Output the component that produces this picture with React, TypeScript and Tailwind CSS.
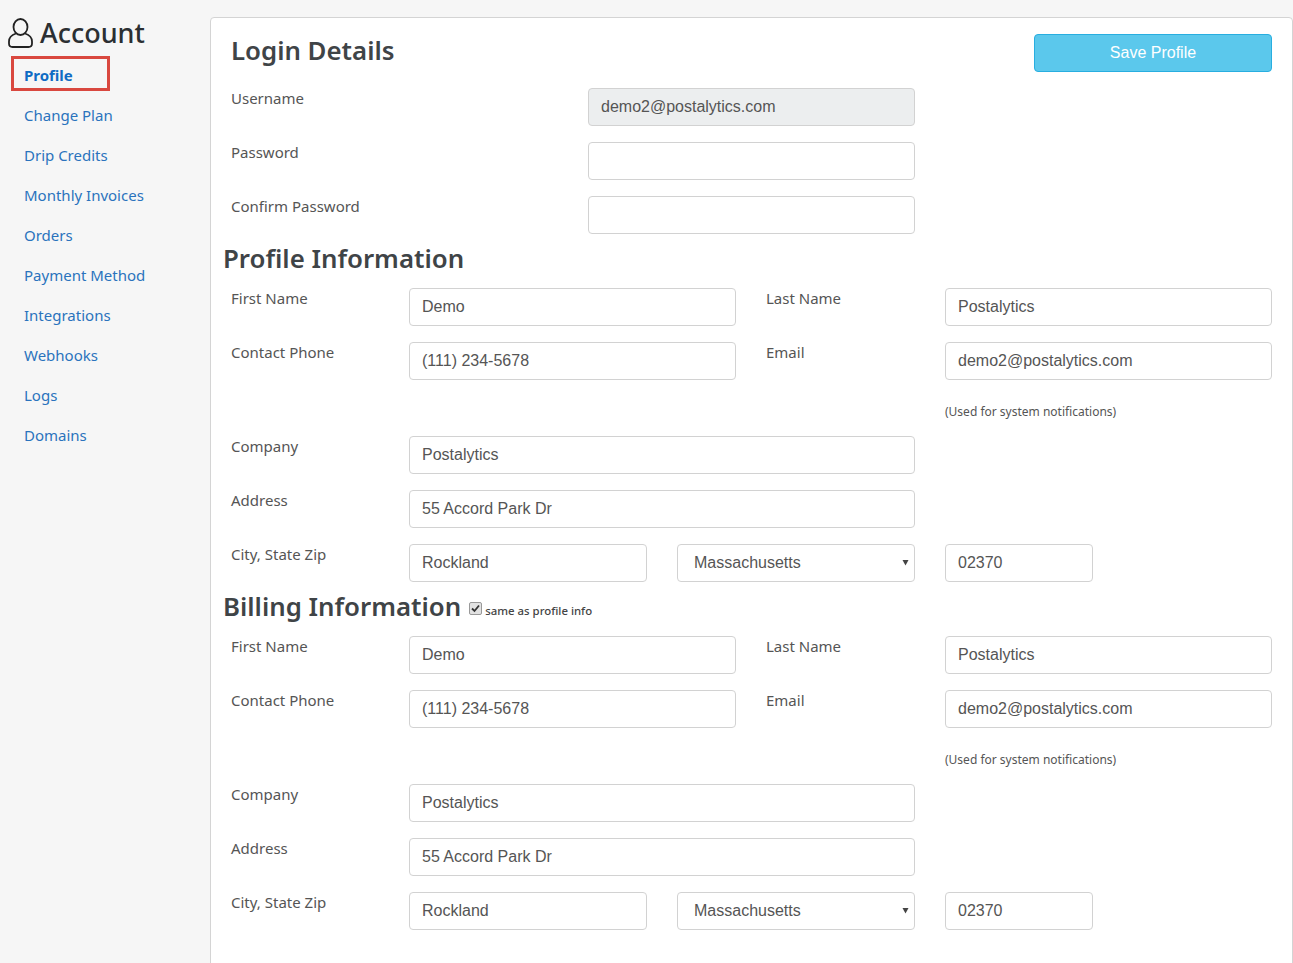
import React from 'react';

const links = ['Profile', 'Change Plan', 'Drip Credits', 'Monthly Invoices', 'Orders', 'Payment Method', 'Integrations', 'Webhooks', 'Logs', 'Domains'];

const Label: React.FC<{ text: string; className: string }> = ({ text, className }) => (
  <label className={`shrink-0 text-[15px] leading-[21px] text-[#555] ${className}`}>{text}</label>
);

const Field: React.FC<{ value?: string; className: string; disabled?: boolean }> = ({ value = '', className, disabled }) => (
  <input
    readOnly
    disabled={disabled}
    defaultValue={value}
    className={`h-[38px] shrink-0 rounded-[4px] border border-[#d2d2d2] px-3 font-['Liberation_Sans',sans-serif] text-[16px] text-[#555] ${disabled ? 'bg-[#eceeef]' : 'bg-white'} ${className}`}
  />
);

const Heading: React.FC<{ text: string; children?: React.ReactNode }> = ({ text, children }) => (
  <div className="-mb-[5px] -ml-[8px] -mt-[11px] flex h-[38px] items-center">
    <h2 className="text-[25.8px] font-semibold leading-[38px] text-[#3f4447]">{text}</h2>
    {children}
  </div>
);

const ContactFields: React.FC = () => (
  <>
    <div className="flex">
      <Label text="First Name" className="w-[178px]" />
      <Field value="Demo" className="w-[327px]" />
      <Label text="Last Name" className="ml-[30px] w-[179px]" />
      <Field value="Postalytics" className="w-[327px]" />
    </div>
    <div className="flex">
      <Label text="Contact Phone" className="w-[178px]" />
      <Field value="(111) 234-5678" className="w-[327px]" />
      <Label text="Email" className="ml-[30px] w-[179px]" />
      <Field value="demo2@postalytics.com" className="w-[327px]" />
    </div>
    <div className="flex h-[24px] items-end pl-[714px] text-[12px] leading-[16px] text-[#555]">(Used for system notifications)</div>
    <div className="flex">
      <Label text="Company" className="w-[178px]" />
      <Field value="Postalytics" className="w-[506px]" />
    </div>
    <div className="flex">
      <Label text="Address" className="w-[178px]" />
      <Field value="55 Accord Park Dr" className="w-[506px]" />
    </div>
    <div className="flex">
      <Label text="City, State Zip" className="w-[178px]" />
      <Field value="Rockland" className="w-[238px]" />
      <div className="relative ml-[30px] h-[38px] w-[238px] shrink-0">
        <select
          defaultValue="Massachusetts"
          className="h-full w-full appearance-none rounded-[4px] border border-[#d2d2d2] bg-white px-4 font-['Liberation_Sans',sans-serif] text-[16px] text-[#555]"
        >
          <option>Massachusetts</option>
        </select>
        <svg className="absolute right-[6px] top-[15px]" width="7" height="7" viewBox="0 0 7 7">
          <path d="M0.5 1 H6.5 L3.5 6.5 Z" fill="#444" />
        </svg>
      </div>
      <Field value="02370" className="ml-[30px] w-[148px]" />
    </div>
  </>
);

export default function App() {
  return (
    <div className="flex h-[963px] overflow-hidden bg-[#f6f6f6] font-['Noto_Sans',sans-serif]">
      <aside className="w-[210px] shrink-0">
        <div className="flex h-[55px] items-center gap-[7px] pl-2 pt-[11px]">
          <svg width="25" height="30" viewBox="0 0 25 30" fill="none" stroke="#222" strokeWidth="1.8">
            <ellipse cx="12.5" cy="9" rx="7" ry="8" />
            <path d="M8 15.5 C3.5 17 1 19.5 1 23.5 V25.5 C1 27.5 2.5 29 4.5 29 H20.5 C22.5 29 24 27.5 24 25.5 V23.5 C24 19.5 21.5 17 17 15.5" />
          </svg>
          <h1 className="text-[27px] font-medium leading-[36px] text-[#2b2f32]">Account</h1>
        </div>
        <nav className="flex flex-col">
          {links.map((l, i) => (
            <a key={l} className={`relative flex h-[40px] items-center pl-6 text-[15px] ${i === 0 ? 'font-bold text-[#0f6cc4]' : 'text-[#2a73bd]'}`}>
              {l}
              {i === 0 && <span className="absolute left-[11px] top-[1px] h-[35px] w-[99px] border-[3px] border-[#d9483f]" />}
            </a>
          ))}
        </nav>
      </aside>
      <main className="mt-[17px] flex h-[1000px] w-[1083px] flex-col gap-4 rounded-t-[4px] border border-[#d4d4d4] bg-white pl-5 pr-5 pt-4">
        <div className="flex h-[38px] items-center justify-between">
          <h2 className="mb-[6px] text-[25.8px] font-semibold leading-[38px] text-[#3f4447]">Login Details</h2>
          <button className="h-[38px] w-[238px] rounded-[4px] border border-[#28aee0] bg-[#5bc8ec] font-['Liberation_Sans',sans-serif] text-[16px] text-white">Save Profile</button>
        </div>
        <div className="flex">
          <Label text="Username" className="w-[357px]" />
          <Field value="demo2@postalytics.com" disabled className="w-[327px]" />
        </div>
        <div className="flex">
          <Label text="Password" className="w-[357px]" />
          <Field className="w-[327px]" />
        </div>
        <div className="flex">
          <Label text="Confirm Password" className="w-[357px]" />
          <Field className="w-[327px]" />
        </div>
        <Heading text="Profile Information" />
        <ContactFields />
        <Heading text="Billing Information">
          <span className="ml-[8px] mt-[9px] flex items-center gap-[3px] text-[11.4px] font-medium text-[#444]">
            <span className="mb-[3px] flex h-[13px] w-[13px] items-center justify-center rounded-[2px] border border-[#999] bg-[#e2e2e2]">
              <svg width="9" height="9" viewBox="0 0 9 9" fill="none" stroke="#333" strokeWidth="1.8">
                <path d="M1 4.5 L3.5 7 L8 1.5" />
              </svg>
            </span>
            same as profile info
          </span>
        </Heading>
        <ContactFields />
      </main>
    </div>
  );
}
